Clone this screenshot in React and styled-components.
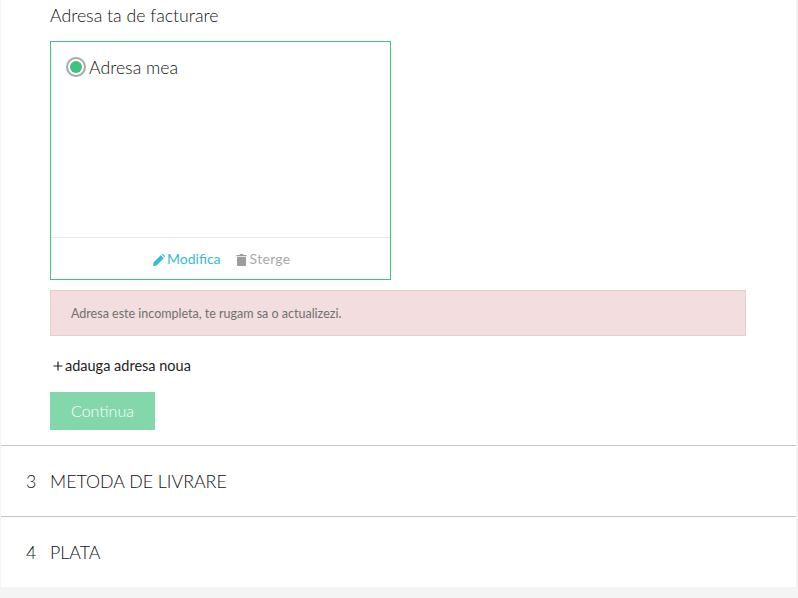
import React from "react";
import styled, { createGlobalStyle } from "styled-components";

const Global = createGlobalStyle`
  html, body { margin: 0; padding: 0; background: #f4f4f4; height: 598px; overflow: hidden; }
  body { font-family: Lato, "Liberation Sans", sans-serif; }
`;

const Panel = styled.main`
  margin: 0 2px 0 1px;
  height: 587px;
  background: #fff;
  display: flex;
  flex-direction: column;
`;

const Billing = styled.section`
  height: 445px;
  box-sizing: border-box;
  padding: 0 50px 0 49px;
  display: flex;
  flex-direction: column;
  align-items: flex-start;
`;

const Title = styled.h2`
  margin: 5px 0 0;
  height: 36px;
  font-size: 17.7px;
  line-height: 22px;
  font-weight: 300;
  color: #111;
`;

const Card = styled.div`
  width: 341px;
  height: 239px;
  box-sizing: border-box;
  border: 1px solid #3fc380;
  display: flex;
  flex-direction: column;
`;

const CardBody = styled.label`
  flex: 1;
  display: flex;
  align-items: flex-start;
  padding: 15px 15px 0;
  gap: 3px;
  font-size: 17.7px;
  line-height: 22px;
  font-weight: 300;
  color: #111;
`;

const Radio = styled.span`
  width: 20px;
  height: 20px;
  box-sizing: border-box;
  border: 2px solid #a8a8a8;
  border-radius: 50%;
  padding: 2px;
  background: #fff;
  &::after {
    content: "";
    display: block;
    width: 12px;
    height: 12px;
    border-radius: 50%;
    background: #3fc380;
  }
`;

const CardFooter = styled.div`
  height: 42px;
  box-sizing: border-box;
  border-top: 1px solid #e6e6e6;
  display: flex;
  align-items: center;
  padding: 0 0 0 102px;
  gap: 15px;
`;

const Action = styled.a`
  display: flex;
  align-items: center;
  gap: ${(p) => p.$gap}px;
  font-size: 14px;
  letter-spacing: ${(p) => p.$tracking || 0}px;
  font-weight: 400;
  color: ${(p) => p.$color};
  svg { fill: ${(p) => p.$iconColor || p.$color}; display: block; margin-top: 2px; }
`;

const Alert = styled.div`
  width: 696px;
  height: 46px;
  margin-top: 10px;
  box-sizing: border-box;
  padding: 0 20px;
  display: flex;
  align-items: center;
  background: #f2dede;
  border: 1px solid #ebcccc;
  font-size: 12.5px;
  font-weight: 400;
  color: #707070;
`;

const AddLink = styled.a`
  margin: 20px 0 0 3px;
  height: 18px;
  display: flex;
  align-items: center;
  gap: 2px;
  font-size: 14.5px;
  font-weight: 400;
  color: #222;
  svg { display: block; margin-top: 1px; }
`;

const Continue = styled.button`
  margin-top: 18px;
  width: 105px;
  height: 38px;
  border: 0;
  padding: 0 0 2px;
  background: #84d6ab;
  color: #fff;
  font-family: inherit;
  font-size: 16px;
  font-weight: 300;
`;

const Step = styled.section`
  height: ${(p) => p.$h}px;
  box-sizing: border-box;
  border-top: 1px solid #c4c4c4;
  display: flex;
  align-items: center;
  padding-left: 25px;
  font-size: 17.8px;
  font-weight: 300;
  color: #111;
`;

const StepNumber = styled.span`
  width: 24px;
`;

export default function App() {
  return (
    <>
      <Global />
      <Panel>
        <Billing>
          <Title>Adresa ta de facturare</Title>
          <Card>
            <CardBody>
              <Radio />
              Adresa mea
            </CardBody>
            <CardFooter>
              <Action $color="#35bcd6" $gap={2}>
                <svg width="12" height="12" viewBox="0 0 14 14" aria-hidden="true">
                  <path d="M0 14 L0.6 9.8 L9 1.6 L12.6 5 L4.2 13.4 Z M10 0.7 L10.8 0 Q11.2 -0.2 11.6 0.1 L14 2.5 Q14.2 2.9 13.9 3.3 L13.4 3.9 Z" />
                </svg>
                Modifica
              </Action>
              <Action $color="#a9a9a9" $iconColor="#9c9c9c" $gap={3} $tracking={0.3}>
                <svg width="11" height="12" viewBox="1 1 11 13" preserveAspectRatio="none" aria-hidden="true">
                  <path d="M2 4 H11 V13 Q11 14 10 14 H3 Q2 14 2 13 Z M1.5 2 H4.5 L5 1 H8 L8.5 2 H11.5 V3.2 H1.5 Z" />
                </svg>
                Sterge
              </Action>
            </CardFooter>
          </Card>
          <Alert>Adresa este incompleta, te rugam sa o actualizezi.</Alert>
          <AddLink>
            <svg width="10" height="10" viewBox="0 0 10 10" aria-hidden="true">
              <path d="M5 0.5 V9.5 M0.5 5 H9.5" stroke="#222" strokeWidth="1.2" />
            </svg>
            adauga adresa noua
          </AddLink>
          <Continue>Continua</Continue>
        </Billing>
        <Step $h={71}><StepNumber>3</StepNumber>METODA DE LIVRARE</Step>
        <Step $h={71}><StepNumber>4</StepNumber>PLATA</Step>
      </Panel>
    </>
  );
}
